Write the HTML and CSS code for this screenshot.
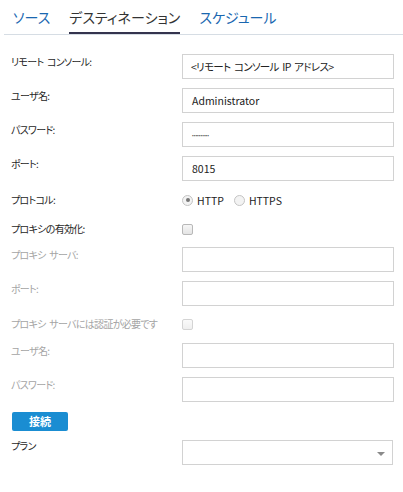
FILE: index.html
```html
<!DOCTYPE html>
<html lang="ja">
<head>
<meta charset="utf-8">
<link rel="stylesheet" href="styles.css">
</head>
<body>
<div class="tabs">
  <div class="tab">ソース</div>
  <div class="tab active">デスティネーション</div>
  <div class="tab">スケジュール</div>
</div>
<div class="form">
  <div class="row">
    <div class="label">リモート コンソール:</div>
    <div class="field jp">&lt;リモート コンソール IP アドレス&gt;</div>
  </div>
  <div class="row">
    <div class="label">ユーザ名:</div>
    <div class="field">Administrator</div>
  </div>
  <div class="row">
    <div class="label">パスワード:</div>
    <div class="field"><span class="dots">••••••••••</span></div>
  </div>
  <div class="row">
    <div class="label">ポート:</div>
    <div class="field">8015</div>
  </div>
  <div class="row center proto">
    <div class="label">プロトコル:</div>
    <div class="radios">
      <span class="radio checked"></span><span class="rtext">HTTP</span>
      <span class="radio"></span><span class="rtext">HTTPS</span>
    </div>
  </div>
  <div class="row center chk">
    <div class="label">プロキシの有効化:</div>
    <span class="checkbox"></span>
  </div>
  <div class="row dis">
    <div class="label">プロキシ サーバ:</div>
    <div class="field"></div>
  </div>
  <div class="row dis">
    <div class="label">ポート:</div>
    <div class="field"></div>
  </div>
  <div class="row center chk dis">
    <div class="label">プロキシ サーバには認証が必要です</div>
    <span class="checkbox"></span>
  </div>
  <div class="row dis">
    <div class="label">ユーザ名:</div>
    <div class="field"></div>
  </div>
  <div class="row dis">
    <div class="label">パスワード:</div>
    <div class="field"></div>
  </div>
  <div class="btnrow"><button class="btn">接続</button></div>
  <div class="row plan">
    <div class="label">プラン</div>
    <div class="field select"><span class="arrow"></span></div>
  </div>
</div>
</body>
</html>
```
FILE: styles.css
```css
body {
  margin: 0;
  background: #fff;
  font-family: "Noto Sans CJK JP", "Noto Sans", sans-serif;
  font-feature-settings: "palt";
  color: #333;
}
.tabs {
  display: flex;
  gap: 19px;
  margin-left: 4px;
  padding-left: 9px;
  border-bottom: 1px solid #d6dde4;
  height: 34px;
}
.tab {
  font-size: 14px;
  line-height: 20px;
  padding-top: 7px;
  height: 25px;
  border-bottom: 2px solid transparent;
  color: #1a67b0;
}
.tab.active {
  color: #333;
  border-bottom-color: #34344e;
}
.form {
  padding: 19px 0 0 11px;
}
.row {
  display: flex;
  align-items: flex-start;
  margin-bottom: 9px;
}
.label {
  width: 171px;
  font-size: 10px;
  font-weight: 400;
  letter-spacing: -0.7px;
  word-spacing: 2px;
  line-height: 16px;
  color: #262626;
  white-space: nowrap;
}
.dis .label {
  color: #a4a4a4;
}
.field {
  box-sizing: border-box;
  width: 212px;
  height: 25px;
  border: 1px solid #d2d2d2;
  padding: 0 9px;
  font-size: 10.5px;
  line-height: 23px;
  color: #222;
  position: relative;
}
.field.jp {
  padding-left: 8px;
  letter-spacing: -0.7px;
  word-spacing: 2px;
}
.dots {
  font-size: 5px;
  letter-spacing: 0;
  color: #555;
  vertical-align: 2px;
}
.row.center {
  align-items: center;
  height: 20px;
}
.row.proto {
  margin-top: 7px;
  margin-bottom: 9px;
}
.row.chk {
  margin-bottom: 8px;
}
.row.dis + .row.chk {
  margin-top: -1px;
  margin-bottom: 9px;
}
.radios {
  display: flex;
  align-items: center;
  font-size: 10.5px;
  color: #222;
}
.radio {
  box-sizing: border-box;
  width: 11px;
  height: 11px;
  border-radius: 50%;
  border: 1px solid #c4c4c4;
  background: #f3f3f3;
  margin-left: 0;
  margin-right: 4px;
  position: relative;
}
.radio.checked::after {
  content: "";
  position: absolute;
  left: 2.5px;
  top: 2.5px;
  width: 4px;
  height: 4px;
  border-radius: 50%;
  background: #777;
}
.rtext {
  margin-right: 10px;
}
.checkbox {
  box-sizing: border-box;
  width: 11px;
  height: 11px;
  border: 1px solid #b8b8b8;
  border-radius: 2px;
  background: linear-gradient(#f6f6f6, #e4e4e4);
}
.dis .checkbox {
  border-color: #d4d4d4;
  background: linear-gradient(#fafafa, #efefef);
}
.btnrow {
  margin-top: 10px;
  margin-bottom: 9px;
}
.btn {
  display: block;
  margin-left: 1px;
  width: 56px;
  height: 19px;
  border: none;
  border-radius: 2px;
  background: #1a8dd2;
  color: #fff;
  font-family: "Noto Sans CJK JP", sans-serif;
  font-weight: bold;
  font-size: 11px;
  line-height: 19px;
  padding: 0;
}
.row.plan .label {
  line-height: 12px;
}
.select {
  width: 211px;
}
.arrow {
  position: absolute;
  right: 7px;
  top: 11px;
  width: 0;
  height: 0;
  border-left: 4px solid transparent;
  border-right: 4px solid transparent;
  border-top: 4px solid #8a8a8a;
}
```
